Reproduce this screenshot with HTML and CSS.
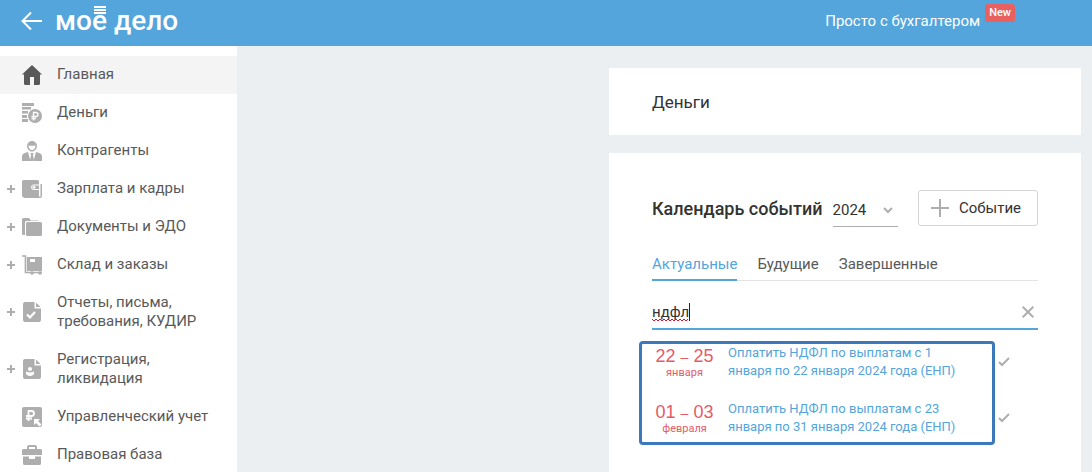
FILE: index.html
```html
<!DOCTYPE html>
<html lang="ru">
<head>
  <meta charset="UTF-8">
  <meta name="viewport" content="width=device-width, initial-scale=1">
  <title>Моё дело</title>
  <link rel="stylesheet" href="styles.css">
</head>
<body>
<header class="header">
  <a class="back" href="#" aria-label="Назад">
    <svg width="22" height="20" viewBox="0 0 22 20"><path d="M10 1.500L1.500 10l8.500 8.500M1.500 10H21" fill="none" stroke="#fff" stroke-width="2"/></svg>
  </a>
  <a class="logo" href="#">мо<span class="logo-e">е<i></i></span> дело</a>
  <a class="promo" href="#">Просто с бухгалтером<span class="badge">New</span></a>
</header>
<div class="layout">
  <nav class="sidebar">
    <ul>
      <li><a class="item on" href="#"><span class="more"></span>
        <svg class="icon" viewBox="0 0 20 20"><path d="M10 0l10 9.500h-2V18.500a1.500 1.500 0 0 1-1.500 1.500H12v-8H8v8H3.500A1.500 1.500 0 0 1 2 18.500V9.500H0z"/></svg>
        <span>Главная</span></a></li>
      <li><a class="item" href="#"><span class="more"></span>
        <svg class="icon" viewBox="0 0 20 20"><path d="M0 0h12v3H0zM0 4h9v2.500H0zM0 8h6v2.500H0zM0 12h5v3H0zM0 16h6v3H0z"/><circle cx="13" cy="13" r="7"/><path d="M11.500 17.500V9.500h2.500a2 2 0 0 1 0 4H9.500M9.500 15.500H14" fill="none" stroke="#fff" stroke-width="1.300"/></svg>
        <span>Деньги</span></a></li>
      <li><a class="item" href="#"><span class="more"></span>
        <svg class="icon" viewBox="0 0 20 20"><path fill-rule="evenodd" d="M10 0a5 5 0 0 1 5 5c0 2.800-2.200 5.500-5 5.500S5 7.800 5 5a5 5 0 0 1 5-5zM6.500 4.500c0 2.500 1.500 4.500 3.500 4.500s3.500-2 3.500-4.500c-2 .3-5 .3-7 0z"/><path d="M0 20v-5c0-2 2-3 6-4l2.500 9zM20 20v-5c0-2-2-3-6-4l-2.500 9zM8.500 12h3l-.5 2 1 6H8l1-6z"/></svg>
        <span>Контрагенты</span></a></li>
      <li><a class="item" href="#"><span class="more plus"></span>
        <svg class="icon" viewBox="0 0 20 20"><path d="M1.500 1h14A1.500 1.500 0 0 1 17 2.500V16H1.500A1.500 1.500 0 0 1 0 14.500v-12A1.500 1.500 0 0 1 1.500 1zM18.500 5H20v12a2 2 0 0 1-2 2H2v-1.500h16.500z"/><path d="M0 14h17v4.500H2A2 2 0 0 1 0 16.500z"/><path d="M17.500 6h-6A2 2 0 0 0 9.500 8v.500a2 2 0 0 0 2 2h6" fill="none" stroke="#fff"/><circle cx="12" cy="8.300" r="1.400" fill="#fff"/></svg>
        <span>Зарплата и кадры</span></a></li>
      <li><a class="item" href="#"><span class="more plus"></span>
        <svg class="icon" viewBox="0 0 20 20"><path d="M1.500 1H7l2 2.500h7V4H4.500A1.500 1.500 0 0 0 3 5.500V18H1.500A1.500 1.500 0 0 1 0 16.500v-14A1.500 1.500 0 0 1 1.500 1z"/><path d="M5.500 5h13A1.500 1.500 0 0 1 20 6.500v11a1.500 1.500 0 0 1-1.500 1.500H5.500A1.500 1.500 0 0 1 4 17.500v-11A1.500 1.500 0 0 1 5.500 5z"/></svg>
        <span>Документы и ЭДО</span></a></li>
      <li><a class="item" href="#"><span class="more plus"></span>
        <svg class="icon" viewBox="0 0 20 20"><path d="M0 1h3.500v16.500H20" fill="none" stroke="#aeaeae" stroke-width="1.700"/><path fill-rule="evenodd" d="M5 2h15v14H5zM8 4v3h5V4z"/><circle cx="10" cy="18" r="1.800"/><circle cx="18" cy="18" r="1.800"/></svg>
        <span>Склад и заказы</span></a></li>
      <li><a class="item" href="#"><span class="more plus"></span>
        <svg class="icon" viewBox="0 0 20 20"><path d="M3 0h9.500v6.500H19V18a2 2 0 0 1-2 2H3a2 2 0 0 1-2-2V2a2 2 0 0 1 2-2zM14 .5L18.500 5H14z"/><path d="M5 12.500l3 3 5-5.500" fill="none" stroke="#fff" stroke-width="2.200"/></svg>
        <span>Отчеты, письма, требования, КУДИР</span></a></li>
      <li><a class="item" href="#"><span class="more plus"></span>
        <svg class="icon" viewBox="0 0 20 20"><path d="M3 0h9.500v6.500H19V18a2 2 0 0 1-2 2H3a2 2 0 0 1-2-2V2a2 2 0 0 1 2-2zM14 .5L18.500 5H14z"/><circle cx="8" cy="10" r="2" fill="#fff"/><path d="M4 12.500c1 0 2 1 4 1s3-1 4-1v2c0 1.500-2 2.500-4 2.500s-4-1-4-2.500z" fill="#fff"/></svg>
        <span>Регистрация, ликвидация</span></a></li>
      <li><a class="item" href="#"><span class="more"></span>
        <svg class="icon" viewBox="0 0 20 20"><rect width="20" height="20" rx="2"/><path d="M6.500 14V4H9.500a2.500 2.500 0 0 1 0 5H4M4 11.500h6" fill="none" stroke="#fff" stroke-width="1.800"/><path d="M12 12h6l-2 2 3.500 3.500-2 2L14 16l-2 2z" fill="#fff"/></svg>
        <span>Управленческий учет</span></a></li>
      <li><a class="item" href="#"><span class="more"></span>
        <svg class="icon" viewBox="0 0 20 20"><path fill-rule="evenodd" d="M5 4V2a2 2 0 0 1 2-2h6a2 2 0 0 1 2 2v2h3.500A1.500 1.500 0 0 1 20 5.500V10H0V5.500A1.500 1.500 0 0 1 1.500 4zM7 4h6V2H7z"/><path d="M1 11.500h6V14h6v-2.500h6v7a1.500 1.500 0 0 1-1.500 1.500h-15A1.500 1.500 0 0 1 1 18.500z"/></svg>
        <span>Правовая база</span></a></li>
    </ul>
  </nav>
  <main class="content">
    <section class="card money">
      <h2>Деньги</h2>
    </section>
    <section class="card calendar">
      <div class="calendar-head">
        <h2>Календарь событий</h2>
        <div class="year">
          <select aria-label="Год"><option>2024</option></select>
          <svg width="10" height="7" viewBox="0 0 10 7"><path d="M1 1l4 4 4-4" fill="none" stroke="#aeaeae" stroke-width="2"/></svg>
        </div>
        <button class="add" type="button">
          <svg width="18" height="18" viewBox="0 0 18 18"><path d="M9 0v18M0 9h18" stroke="#aeaeae" stroke-width="2"/></svg>
          Событие
        </button>
      </div>
      <div class="tabs">
        <a class="on" href="#">Актуальные</a>
        <a href="#">Будущие</a>
        <a href="#">Завершенные</a>
      </div>
      <div class="search">
        <input type="text" value="ндфл" aria-label="Поиск события">
        <svg class="typo" width="39" height="20" viewBox="0 0 39 20"><path d="M0 16l2 2 2-2 2 2 2-2 2 2 2-2 2 2 2-2 2 2 2-2 2 2 2-2 2 2 2-2 2 2 2-2 2 2 2-2" fill="none" stroke="#e8112d"/><path d="M37.500 0v18" stroke="#222"/></svg>
        <button class="clear" type="button" aria-label="Очистить">
          <svg width="12" height="12" viewBox="0 0 12 12"><path d="M.7.7l10.600 10.600M11.300.7L.7 11.300" stroke="#aeaeae" stroke-width="2"/></svg>
        </button>
      </div>
      <div class="events">
        <div class="event">
          <div class="date"><b>22 <small>–</small> 25</b><span>января</span></div>
          <a href="#">Оплатить НДФЛ по выплатам с 1 января по 22 января 2024 года (ЕНП)</a>
          <button class="done" type="button" aria-label="Выполнено"><svg width="12" height="10" viewBox="0 0 12 10"><path d="M1 5l3 3 7-7" fill="none" stroke="#aeaeae" stroke-width="2"/></svg></button>
        </div>
        <div class="event">
          <div class="date"><b>01 <small>–</small> 03</b><span>февраля</span></div>
          <a href="#">Оплатить НДФЛ по выплатам с 23 января по 31 января 2024 года (ЕНП)</a>
          <button class="done" type="button" aria-label="Выполнено"><svg width="12" height="10" viewBox="0 0 12 10"><path d="M1 5l3 3 7-7" fill="none" stroke="#aeaeae" stroke-width="2"/></svg></button>
        </div>
        <div class="frame"></div>
      </div>
    </section>
  </main>
</div>
</body>
</html>
```
FILE: styles.css
```css
*{margin:0;padding:0;box-sizing:border-box;}
body{display:flex;flex-direction:column;height:100vh;overflow:hidden;background:#ebeff2;color:#595959;font:15px/19px Roboto,"Liberation Sans",sans-serif;}
a{color:inherit;text-decoration:none;}
ul{list-style:none;}
svg{display:block;flex:none;}
button{border:0;background:none;font:inherit;color:inherit;cursor:pointer;}

/* header */
.header{display:flex;flex:none;align-items:center;height:46px;padding:0 77px 4px 21px;background:#53a5dc;color:#fff;}
.logo{margin-left:12px;font-size:28px;font-weight:500;line-height:32px;}
.logo-e{position:relative;}
.logo-e i{position:absolute;left:2px;top:2px;width:12px;height:8px;background:repeating-linear-gradient(#fff 0,#fff 2px,transparent 2px,transparent 3px);}
.promo{display:flex;gap:5px;margin-left:auto;}
.badge{height:18px;margin-top:-8px;padding:0 4px;border-radius:3px;background:#e86060;font-size:11px;font-weight:500;line-height:18px;}

/* menu */
.layout{display:flex;flex:1;min-height:0;}
.sidebar{flex:none;width:237px;padding-top:10px;background:#fff;overflow:hidden;}
.item{display:flex;align-items:center;padding:9px 20px 10px 7px;}
.item.on{background:#f4f4f4;}
.more{flex:none;width:8px;height:8px;margin-right:7px;}
.plus{background:linear-gradient(#aeaeae,#aeaeae) center/2px 100% no-repeat,linear-gradient(#aeaeae,#aeaeae) center/100% 2px no-repeat;}
.icon{width:20px;height:20px;margin:-1px 15px -1px 0;fill:#aeaeae;}
.on .icon{fill:#595959;}

/* content */
.content{display:flex;flex-direction:column;gap:18px;width:472px;margin:22px 11px 0 auto;}
.card{padding:0 43px;background:#fff;color:#333;}
.money{padding-top:25px;padding-bottom:23px;}
.card h2{font-size:17px;font-weight:400;line-height:19px;}
.calendar{flex:1;padding-top:37px;}
.calendar-head{display:flex;align-items:center;height:36px;}
.calendar .calendar-head h2{font-size:18px;font-weight:500;}
.year{position:relative;width:65px;margin:1px 0 0 10px;}
.year select{width:100%;height:36px;padding-top:4px;border:0;border-bottom:1px solid #aeaeae;background:none;appearance:none;color:#333;font:15px Roboto,sans-serif;}
.year svg{position:absolute;right:5px;top:16px;pointer-events:none;}
.add{display:flex;align-items:center;gap:10px;height:36px;margin-left:auto;padding:0 16px 0 12px;border:1px solid #d4d4d4;border-radius:3px;color:#333;}
.tabs{display:flex;gap:20px;margin-top:27px;border-bottom:1px solid #e3e3e3;color:#595959;}
.tabs a{padding:2px 0 5px;margin-bottom:-1px;border-bottom:2px solid transparent;}
.tabs .on{border-color:#53a5dc;color:#53a5dc;}
.search{display:flex;position:relative;align-items:center;margin-top:13px;padding-top:1px;border-bottom:2px solid #53a5dc;}
.search input{flex:1;min-width:0;height:33px;padding-top:1px;border:0;outline:0;background:none;color:#333;font:15px Roboto,sans-serif;}
.typo{position:absolute;left:0;top:9px;}
.clear{padding:4px;}

/* events */
.events{position:relative;padding-top:14px;}
.event{display:flex;align-items:center;height:36px;margin-bottom:20px;}
.date{display:flex;flex-direction:column;width:65px;color:#e55b68;text-align:center;}
.date b{font:18px/20px "Liberation Sans",sans-serif;}
.date small{font-size:14px;}
.date span{font-size:11px;line-height:11px;}
.event a{width:240px;margin-left:11px;color:#53a5dc;font-size:13px;line-height:18px;}
.done{margin-left:30px;}
.frame{position:absolute;left:-13px;right:43px;top:11px;height:104px;border:3px solid #3b78bc;border-radius:4px;pointer-events:none;}
```
